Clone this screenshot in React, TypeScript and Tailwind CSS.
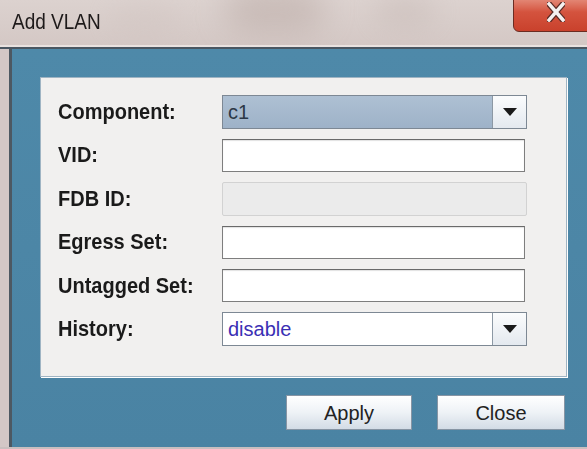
import React from 'react';

const labelCls = "w-[164px] shrink-0 text-[20px] font-bold text-[#1a1a1a] leading-none scale-y-[1.06]";

const Arrow = () => (
  <svg width="14" height="8" viewBox="0 0 14 8">
    <path d="M0 0h14L7 8z" fill="#1a1a1a" />
  </svg>
);

const TextField = ({ disabled }: { disabled?: boolean }) => (
  <div
    className={
      disabled
        ? "w-[305px] h-[34px] bg-[#ebebeb] border border-[#d2d2d2] rounded-[2px]"
        : "w-[303px] h-[33px] bg-white border border-[#7e7e7e] border-t-[#6a6a6a] shadow-[inset_0_1px_1px_rgba(0,0,0,0.12)]"
    }
  />
);

const Combo = ({ value, selected }: { value: string; selected?: boolean }) => (
  <div className="w-[305px] h-[34px] flex border border-[#7d8894]">
    <div
      className={
        selected
          ? "flex-1 flex items-center pl-[5px] bg-gradient-to-b from-[#aec0d3] to-[#9eb2c8] text-[#2c3846]"
          : "flex-1 flex items-center pl-[5px] bg-white text-[#3a2fb4]"
      }
    >
      <span className="text-[20px] leading-none">{value}</span>
    </div>
    <div className="w-[34px] flex items-center justify-center border-l border-[#8c98a4] bg-gradient-to-b from-[#fbfcfd] to-[#e4e9ef]">
      <Arrow />
    </div>
  </div>
);

const Row = ({ label, children }: { label: string; children: React.ReactNode }) => (
  <div className="flex items-center h-[34px]">
    <span className={labelCls}>{label}</span>
    {children}
  </div>
);

const DialogButton = ({ label, width }: { label: string; width: string }) => (
  <button
    className={`${width} h-[35px] border border-[#8795a4] bg-gradient-to-b from-[#ffffff] via-[#eef2f6] to-[#d3dce6] text-[20px] text-[#222] leading-none`}
  >
    {label}
  </button>
);

export default function App() {
  return (
    <div
      className="w-[587px] h-[449px] flex flex-col overflow-hidden bg-[#d6cac7]"
      style={{ fontFamily: '"Liberation Sans", Arial, sans-serif' }}
    >
      {/* Title bar */}
      <div className="relative h-[45px] shrink-0 bg-gradient-to-b from-[#dcd2cf] to-[#d4c8c5] overflow-hidden">
        <div className="absolute left-[225px] top-[-14px] w-[100px] h-[46px] rounded-full bg-[#a8958f] opacity-35 blur-[16px]" />
        <div className="absolute left-[375px] top-[-4px] w-[60px] h-[30px] rounded-full bg-[#b9aaa5] opacity-30 blur-[14px]" />
        <div className="absolute left-[110px] top-[5px] w-[70px] h-[28px] rounded-full bg-[#cbbdb9] opacity-30 blur-[14px]" />
        <span className="absolute left-[12px] top-[11px] text-[19px] text-[#1e1a1a] leading-none scale-y-[1.12] origin-top">
          Add VLAN
        </span>
        {/* window close button */}
        <div className="absolute left-[513px] top-[-8px] w-[90px] h-[40px] rounded-bl-[6px] border border-[#6b2c22] bg-gradient-to-b from-[#e9a092] via-[#d4533e] to-[#c9412c] shadow-[inset_0_1px_0_rgba(255,255,255,0.5)]">
          <svg className="absolute left-[33px] top-[9px]" width="18" height="20" viewBox="0 0 18 20">
            <path d="M2 2l14 16M16 2L2 18" stroke="#5a2a24" strokeWidth="6" strokeLinecap="square" />
            <path d="M2 2l14 16M16 2L2 18" stroke="#f4f0ef" strokeWidth="3.5" strokeLinecap="square" />
          </svg>
        </div>
      </div>
      <div className="h-[2px] shrink-0 bg-[#e9e2e0]" />
      <div className="h-[2px] shrink-0 bg-[#4a5661]" />

      {/* Window body */}
      <div className="flex-1 flex">
        <div className="w-[9px] shrink-0 bg-[#d3c7c6]" />
        <div className="w-[3px] shrink-0 bg-[#4d5862]" />
        <div className="flex-1 flex flex-col bg-gradient-to-b from-[#4e89a9] to-[#4a83a3] pl-[28px] pt-[28px]">
          {/* Form panel */}
          <div className="w-[527px] h-[300px] bg-[#f1f0ef] border border-[#9fb4c3] shadow-[1px_1px_0_#ffffff] pl-[17px] pt-[17px] flex flex-col gap-[9.4px]">
            <Row label="Component:">
              <Combo value="c1" selected />
            </Row>
            <Row label="VID:">
              <TextField />
            </Row>
            <Row label="FDB ID:">
              <TextField disabled />
            </Row>
            <Row label="Egress Set:">
              <TextField />
            </Row>
            <Row label="Untagged Set:">
              <TextField />
            </Row>
            <Row label="History:">
              <Combo value="disable" />
            </Row>
          </div>

          {/* Dialog buttons */}
          <div className="flex gap-[25px] mt-[18px] pl-[246px]">
            <DialogButton label="Apply" width="w-[126px]" />
            <DialogButton label="Close" width="w-[128px]" />
          </div>
        </div>
      </div>
      <div className="h-[2px] shrink-0 bg-[#c9bfbf]" />
    </div>
  );
}
